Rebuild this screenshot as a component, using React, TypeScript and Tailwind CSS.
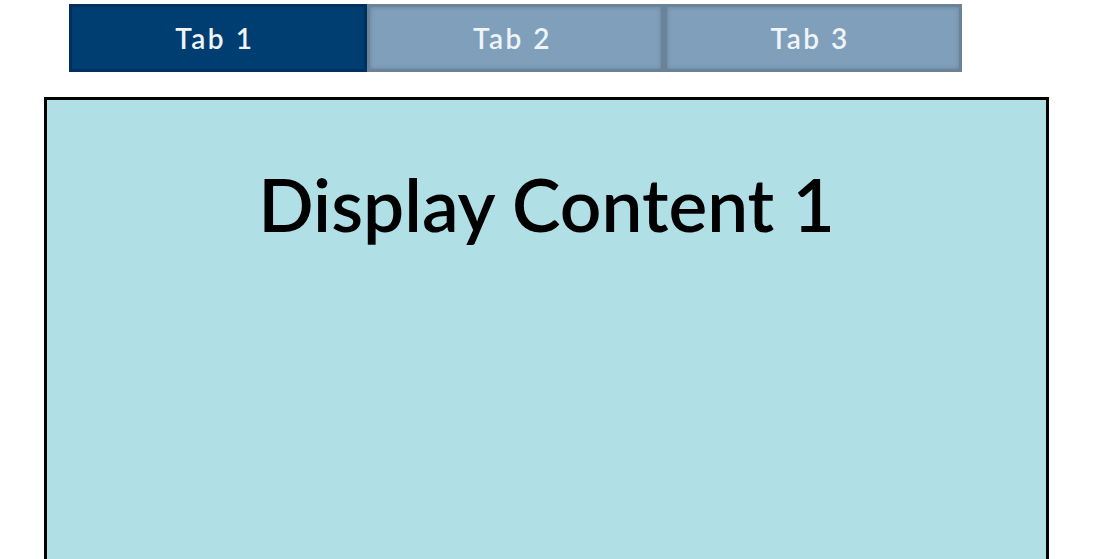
import React, { useState } from "react";

export default function App() {
  const [active, setActive] = useState(0);
  const tabs = ["Tab 1", "Tab 2", "Tab 3"];
  return (
    <div className="w-[1118px] h-[559px] overflow-hidden bg-white" style={{ fontFamily: "Lato, 'Open Sans', sans-serif" }}>
      <div className="ml-[69px] mt-[4px] flex w-[893px] h-[68px]">
        {tabs.map((t, i) => (
          <button
            key={t}
            onClick={() => setActive(i)}
            className={
              "flex-1 h-full flex items-center justify-center text-[28px] font-semibold tracking-[2.5px] text-[#eef4f8] border-[3px] " +
              (i === active
                ? "bg-[#003d70] border-[#00305b]"
                : "bg-[#7f9fba] border-[#6a8399] shadow-[inset_0_0_4px_rgba(90,110,130,0.6)]")
            }
          >
            <span className="pr-[6px]">{t}</span>
          </button>
        ))}
      </div>
      <div className="ml-[44px] mt-[25px] w-[1005px] h-[480px] border-[3px] border-black bg-[#b0e0e6]">
        <h1 className="text-center text-[73px] font-semibold leading-none mt-[68px] text-black">Display Content 1</h1>
      </div>
    </div>
  );
}
